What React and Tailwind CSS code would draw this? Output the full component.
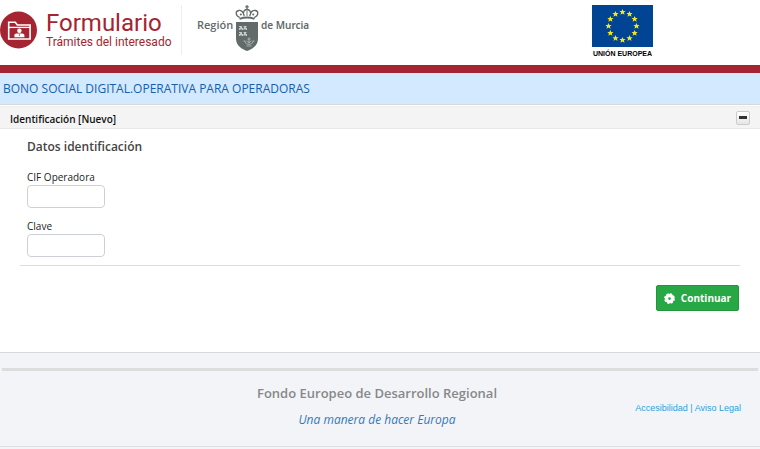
import { useState } from "react";

const STARS = Array.from({ length: 12 }, (_, i) => {
  const a = (i * Math.PI) / 6;
  return { x: 30.5 + 14 * Math.sin(a), y: 21 - 14 * Math.cos(a) };
});

function LogoFormulario() {
  return (
    <svg viewBox="0 0 38 38" className="h-[38px] w-[38px] shrink-0" aria-hidden="true">
      <circle cx="18.5" cy="19" r="18.5" fill="#a52431" />
      <path d="M8.7 28V11.2h6.6l2 2.8h12.8v14z" fill="none" stroke="#fff" strokeWidth="1.6" />
      <path d="M8.7 16.4h21.4" stroke="#fff" strokeWidth="1.3" />
      <circle cx="19.4" cy="19.8" r="2.2" fill="#fff" />
      <path d="M14.4 26.3v-2.2q0-1.7 2-1.7h6q2 0 2 1.7v2.2z" fill="#fff" />
      <path d="M19.4 22.8v2.4" stroke="#a52431" strokeWidth="0.7" />
    </svg>
  );
}

function Escudo() {
  return (
    <svg viewBox="0 0 24 46" className="h-[46px] w-[24px] shrink-0" aria-hidden="true">
      {/* CORONA */}
      <g fill="none" stroke="#626a6a" strokeWidth="1.3">
        <path d="M12 0v4.5M10.2 1.9h3.6" />
        <path d="M4.8 12.5C.2 10.5.2 6 3.8 5.5 6.2 5.2 7.8 6.5 8 8.2" />
        <path d="M19.2 12.5C23.8 10.5 23.8 6 20.2 5.5 17.8 5.2 16.2 6.5 16 8.2" />
        <path d="M9.3 11C7.2 7.5 9 4.5 12 4.5s4.8 3 2.7 6.5" />
        <path d="M12 5.5v5.5" strokeWidth="0.9" />
        <path d="M4.5 13.9q7.5-2.6 15 0" strokeWidth="2" />
      </g>
      <g fill="#626a6a">
        <circle cx="5.8" cy="9.5" r="1" />
        <circle cx="18.2" cy="9.5" r="1" />
        <path d="M1 17h22v16.5C23 41 17 44 12 46 7 44 1 41 1 33.5z" />
      </g>
      {/* CASTILLOS */}
      <g fill="#c6caca">
        <path d="M4 21h3v2h1v2H6.500v-1h-1v1H4v-2h1v-1H4z" />
        <path d="M8.500 21h3v1h-.5v1h1v2h-1.500v-1h-1v1H8.500v-2h.5v-1h-.5z" />
        <path d="M4 27h3v2h1v2H6.500v-1h-1v1H4v-2h1v-1H4z" />
        <path d="M8.500 27h3v1h-.5v1h1v2h-1.500v-1h-1v1H8.500v-2h.5v-1h-.5z" />
      </g>
      <g fill="none" stroke="#c6caca" strokeWidth="0.7">
        <path d="M14 32.500v6M12.500 34h3M9.500 36q1 3.500 4.500 3.500t4.500-3.500M11.500 36q2.500 3 5 0M8.500 36h2M17.500 36h2M11.500 41h5" />
      </g>
    </svg>
  );
}

function BanderaUE() {
  return (
    <svg viewBox="0 0 61 42" className="h-[42px] w-[61px]" aria-hidden="true">
      <rect width="61" height="42" fill="#014494" />
      {STARS.map((s, i) => (
        <path
          key={i}
          transform={`translate(${s.x} ${s.y})`}
          d="M0-3 .9-.9h2.200L1.400.6 2 2.800 0 1.500-2 2.800-1.400.6-3.100-.9H-.9z"
          fill="#f8e71c"
        />
      ))}
    </svg>
  );
}

function Engranaje() {
  return (
    <svg viewBox="0 0 12 12" className="h-[11px] w-[11px] shrink-0" aria-hidden="true">
      <circle cx="6" cy="6" r="3.3" fill="none" stroke="#fff" strokeWidth="3.6" />
      <circle cx="6" cy="6" r="5.1" fill="none" stroke="#fff" strokeWidth="1.6" strokeDasharray="2.4 1.605" />
    </svg>
  );
}

function Campo({ id, label, type = "text" }) {
  return (
    <div className="flex flex-col items-start">
      <label htmlFor={id} className="text-[10px] leading-[15px] text-[#222]">
        {label}
      </label>
      <input
        id={id}
        name={id}
        type={type}
        className="h-[23px] w-[78px] rounded border border-[#ced0d8] bg-white px-2 text-[10px] outline-none"
      />
    </div>
  );
}

export default function App() {
  const [abierto, setAbierto] = useState(true);

  return (
    <div className="min-h-screen bg-[#f3f4f8] font-['Open_Sans','Noto_Sans',sans-serif]">
      {/* CABECERA */}
      <header className="flex h-[73px] items-start justify-between border-b-8 border-[#a52431] bg-white pt-[5px] pr-[107px]">
        <div className="flex">
          <div className="flex h-[50px] w-[182px] items-center gap-2 border-r border-[#eee] font-[Roboto,sans-serif] text-[#a52431]">
            <LogoFormulario />
            <div className="whitespace-nowrap">
              <p className="text-2xl leading-[24px]">Formulario</p>
              <p className="text-xs leading-[14px]">Trámites del interesado</p>
            </div>
          </div>
          <div className="flex items-start gap-[2px] pl-[15px] text-[11px] font-semibold whitespace-nowrap text-[#626a6a]">
            <span className="w-[36px] pt-3">Región</span>
            <Escudo />
            <span className="pt-3 font-['Noto_Sans',sans-serif] text-[10px] leading-[17px]">de Murcia</span>
          </div>
        </div>
        <div className="flex flex-col items-center">
          <BanderaUE />
          <span className="font-['Liberation_Sans',sans-serif] text-[7px] leading-[13px] font-bold whitespace-nowrap text-black">
            UNIÓN EUROPEA
          </span>
        </div>
      </header>

      <main className="bg-white">
        <h1 className="h-8 border-b border-[#d5d8da] bg-[#d2e9ff] pl-[3px] text-xs leading-[31px] font-medium text-[#1660ab]">
          BONO SOCIAL DIGITAL.OPERATIVA PARA OPERADORAS
        </h1>

        <section className="mt-px border-t border-[#eee]">
          <div className="flex h-[22px] items-center justify-between border-b border-[#e8e8e8] bg-[#f4f4f4] px-[10px]">
            <h2 className="pt-1 text-[10px] leading-[15px] font-semibold text-[#111]">Identificación [Nuevo]</h2>
            <button
              type="button"
              aria-label="Contraer"
              aria-expanded={abierto}
              onClick={() => setAbierto(!abierto)}
              className="flex h-[14px] w-[14px] items-center justify-center rounded-xs border border-[#ccc] bg-linear-to-b from-white to-[#e6e6e6]"
            >
              <span className="h-[3px] w-2 bg-[#333]" />
            </button>
          </div>

          {abierto && (
            <form onSubmit={(e) => e.preventDefault()} className="px-5 pt-[9px] pb-[41px]">
              <fieldset className="border-b border-[#ddd] pb-2 pl-[7px]">
                <h3 className="text-xs leading-[18px] font-semibold text-[#444]">Datos identificación</h3>
                <div className="flex flex-col gap-[11px] pt-[14px]">
                  <Campo id="cif" label="CIF Operadora" />
                  <Campo id="clave" label="Clave" type="password" />
                </div>
              </fieldset>
              <div className="flex justify-end pt-[19px] pr-px">
                <button
                  type="submit"
                  className="flex h-[26px] w-[83px] items-center justify-center gap-[6px] rounded-xs border border-[#23963d] bg-[#28a745] text-[10px] font-bold text-white"
                >
                  <Engranaje />
                  Continuar
                </button>
              </div>
            </form>
          )}
        </section>
      </main>

      {/* PIE */}
      <footer className="border-t border-[#d9d9d9] px-[2px] pt-[15px]">
        <div className="border-t-3 border-[#ddd]" />
        <div className="-mx-[2px] grid grid-cols-[1fr_auto_1fr] items-center border-b border-[#dcdfe4] pt-3 pb-4">
          <div />
          <div className="pr-[6px] text-center">
            <p className="text-[13px] leading-[20px] font-semibold text-[#888]">Fondo Europeo de Desarrollo Regional</p>
            <p className="pt-[7px] text-xs leading-[20px] text-[#337ab7] italic">Una manera de hacer Europa</p>
          </div>
          <p className="pt-[2px] pr-[19px] text-right font-['Liberation_Sans',sans-serif] text-[9px] leading-[12px] text-[#1fa3dd]">
            <a href="#accesibilidad">Accesibilidad</a> | <a href="#aviso">Aviso Legal</a>
          </p>
        </div>
      </footer>
    </div>
  );
}
